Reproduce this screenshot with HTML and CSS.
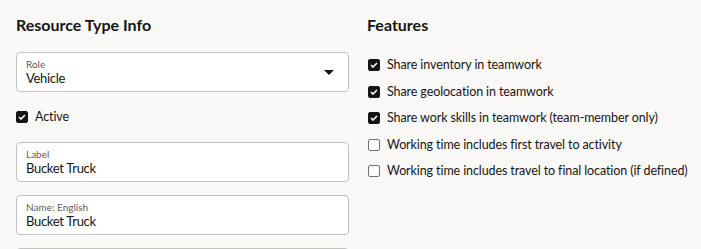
FILE: index.html
```html
<!DOCTYPE html>
<html lang="en">

<head>
    <meta charset="UTF-8">
    <meta name="viewport" content="width=device-width, initial-scale=1.0">
    <title>Resource Type</title>
    <link rel="stylesheet" href="styles.css">
</head>

<body>
    <div class="page">
        <div class="column info">
            <h2 class="heading">Resource Type Info</h2>
            <div class="field select">
                <div class="field-text">
                    <span class="field-label">Role</span>
                    <span class="field-value">Vehicle</span>
                </div>
                <svg class="caret" width="10" height="5" viewBox="0 0 10 5"><path d="M0 0h10L5 5z" fill="#161513"/></svg>
            </div>
            <label class="check">
                <span class="box checked"><svg width="8" height="6" viewBox="0 0 8 6"><path d="M1 3l2 2 4-4" stroke="#fff" stroke-width="1.6" fill="none"/></svg></span>
                Active
            </label>
            <div class="field">
                <div class="field-text">
                    <span class="field-label">Label</span>
                    <span class="field-value">Bucket Truck</span>
                </div>
            </div>
            <div class="field">
                <div class="field-text">
                    <span class="field-label">Name: English</span>
                    <span class="field-value">Bucket Truck</span>
                </div>
            </div>
            <div class="field"></div>
        </div>
        <div class="column features">
            <h2 class="heading">Features</h2>
            <div class="check-list">
                <label class="check">
                    <span class="box checked"><svg width="8" height="6" viewBox="0 0 8 6"><path d="M1 3l2 2 4-4" stroke="#fff" stroke-width="1.6" fill="none"/></svg></span>
                    Share inventory in teamwork
                </label>
                <label class="check">
                    <span class="box checked"><svg width="8" height="6" viewBox="0 0 8 6"><path d="M1 3l2 2 4-4" stroke="#fff" stroke-width="1.6" fill="none"/></svg></span>
                    Share geolocation in teamwork
                </label>
                <label class="check">
                    <span class="box checked"><svg width="8" height="6" viewBox="0 0 8 6"><path d="M1 3l2 2 4-4" stroke="#fff" stroke-width="1.6" fill="none"/></svg></span>
                    Share work skills in teamwork (team-member only)
                </label>
                <label class="check">
                    <span class="box"></span>
                    Working time includes first travel to activity
                </label>
                <label class="check">
                    <span class="box"></span>
                    Working time includes travel to final location (if defined)
                </label>
            </div>
        </div>
    </div>
</body>

</html>
```

FILE: styles.css
```css
* {
    margin: 0;
    padding: 0;
    box-sizing: border-box;
}

body {
    background-color: #fbf9f8;
    font-family: Lato, "Noto Sans", sans-serif;
    color: #161513;
    overflow: hidden;
}

.page {
    display: flex;
    gap: 18px;
    padding: 16px 0 0 16px;
}

.column {
    display: flex;
    flex-direction: column;
}

.info {
    flex: 0 0 333px;
}

.heading {
    font-size: 16px;
    font-weight: 700;
    line-height: 18px;
    margin-bottom: 18px;
}

.field {
    height: 40px;
    flex-shrink: 0;
    background-color: #fff;
    border: 1px solid #c5c3c0;
    border-radius: 4px;
    padding: 0 9px;
    display: flex;
    align-items: center;
    margin-bottom: 13px;
}

.field-text {
    display: flex;
    flex-direction: column;
    flex: 1;
}

.field-label {
    font-size: 10px;
    line-height: 11px;
    color: #5f5d5a;
}

.field-value {
    font-size: 13px;
    letter-spacing: -0.3px;
    line-height: 16px;
}

.caret {
    margin-right: 5px;
}

.select {
    margin-bottom: 17px;
}

.info > .check {
    margin-bottom: 17px;
}

.check {
    display: flex;
    align-items: center;
    gap: 7px;
    font-size: 12.5px;
    letter-spacing: -0.1px;
    line-height: 16px;
    white-space: nowrap;
}

.box {
    width: 12px;
    height: 12px;
    flex-shrink: 0;
    border: 1px solid #75726e;
    border-radius: 2px;
    background-color: #fff;
    display: flex;
    align-items: center;
    justify-content: center;
}

.box.checked {
    background-color: #161513;
    border-color: #161513;
}

.features .heading {
    margin-bottom: 23px;
}

.check-list {
    display: flex;
    flex-direction: column;
    gap: 10.6px;
}

.features .check {
    padding-left: 1px;
}
```
